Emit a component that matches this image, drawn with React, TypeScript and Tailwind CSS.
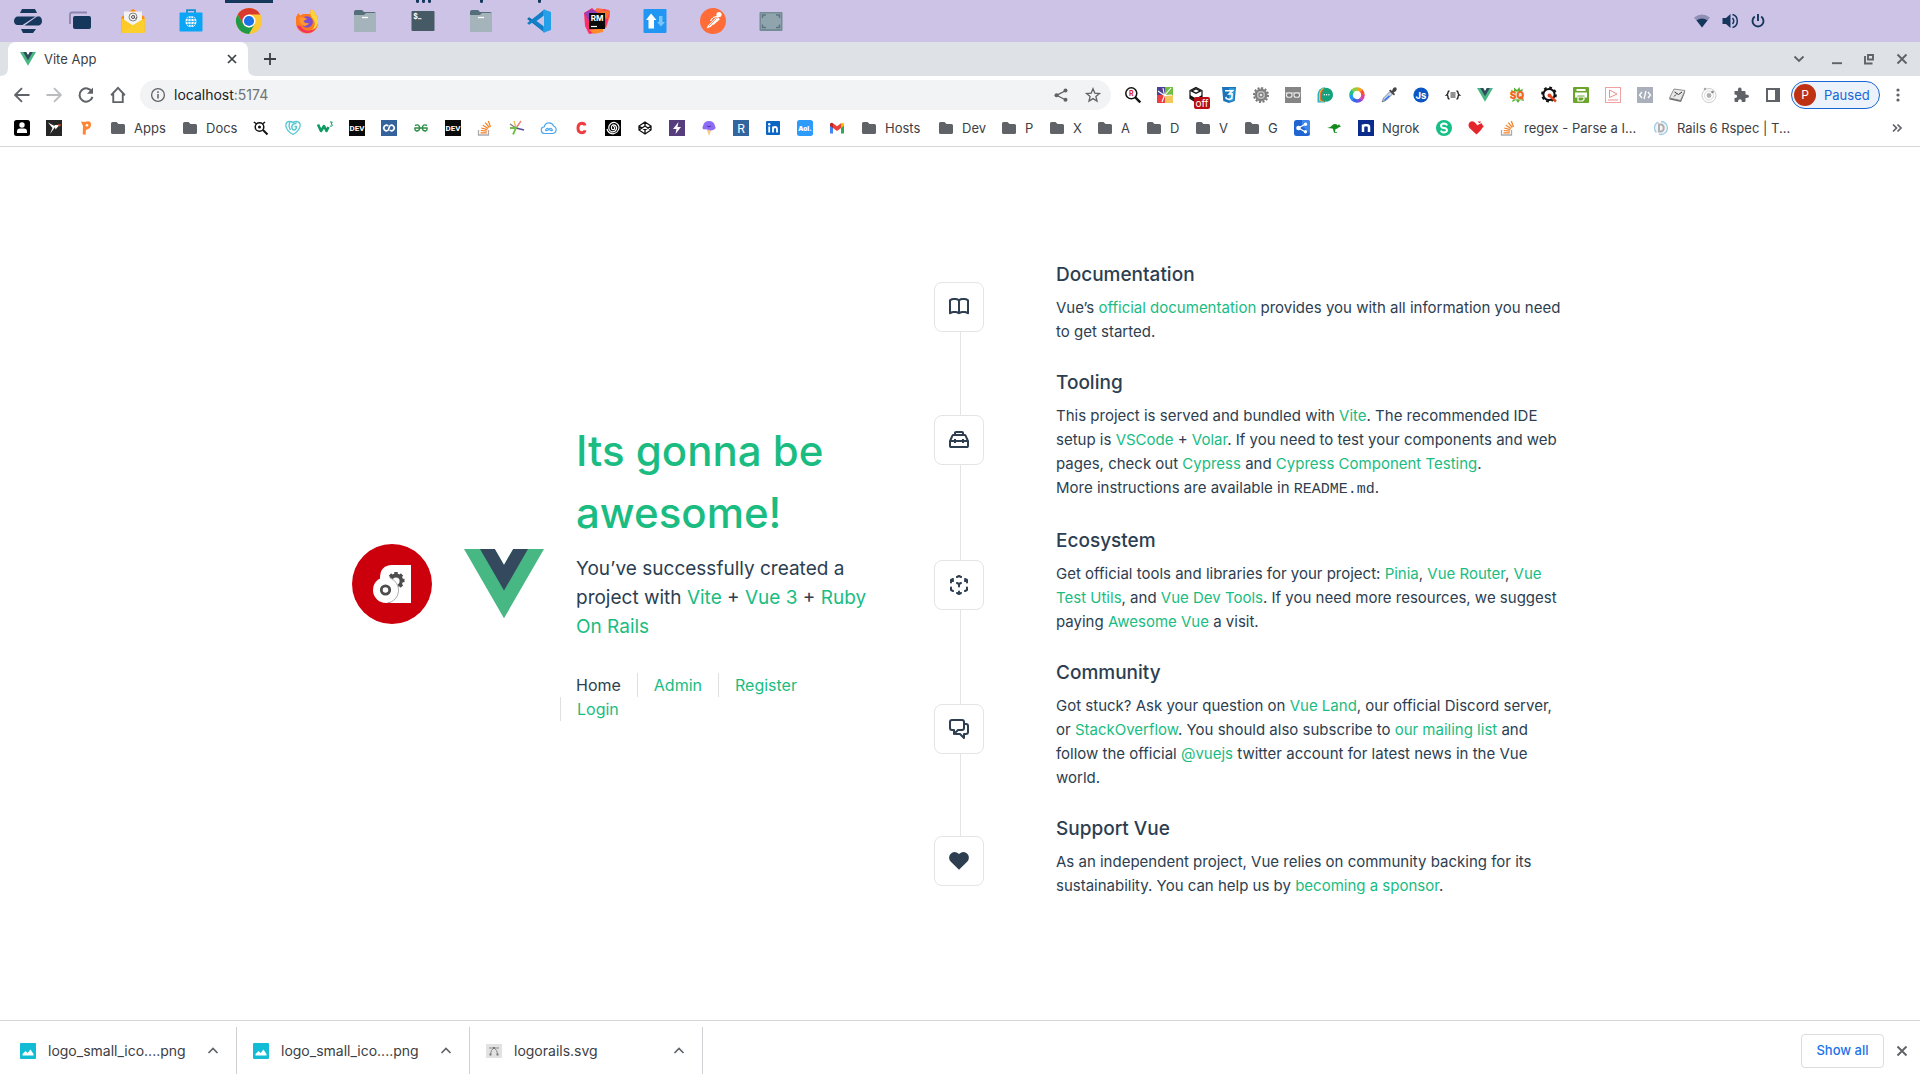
import type { ReactNode } from 'react';

/* ---------- shared drawing helpers ---------- */

function Svg({ children, box = 16, className = 'size-4' }: { children: ReactNode; box?: number; className?: string }) {
  return (
    <svg viewBox={`0 0 ${box} ${box}`} className={`shrink-0 overflow-visible ${className}`} aria-hidden="true">
      {children}
    </svg>
  );
}

function Glyph({ x, y, size, fill = '#fff', children, weight = 700 }: { x: number; y: number; size: number; fill?: string; children: ReactNode; weight?: number }) {
  return (
    <text x={x} y={y} fontSize={size} fill={fill} fontWeight={weight} textAnchor="middle" fontFamily="Inter, sans-serif">
      {children}
    </text>
  );
}

function VueLogo({ className }: { className: string }) {
  return (
    <svg viewBox="0 0 261.76 226.69" className={`shrink-0 ${className}`} aria-hidden="true">
      <path d="M161.096.001l-30.225 52.351L100.647.001H-.005l130.877 226.688L261.749.001z" fill="#47b784" />
      <path d="M161.096.001l-30.225 52.351L100.647.001H52.346l78.526 136.01L209.398.001z" fill="#34495e" />
    </svg>
  );
}

function RailsLogo() {
  return (
    <Svg box={80} className="size-20">
      <circle cx="40" cy="40" r="40" fill="#cc000c" />
      <path d="M28 34c0-8 4-13 12-13h19v38H38L28 46z" fill="#fff" />
      <g fill="#4d4d4d">
        <circle cx="44" cy="36.500" r="7" />
        {[0, 45, 90, 135, 180, 225, 270, 315].map((a) => (
          <rect key={a} x="42.300" y="28" width="3.400" height="5" transform={`rotate(${a} 44 36.500)`} />
        ))}
      </g>
      <circle cx="44" cy="37" r="3.600" fill="#fff" />
      <circle cx="34" cy="46" r="13" fill="#fff" />
      <path d="M38 34a13 13 0 0 1-2 25" fill="none" stroke="#777" strokeWidth=".6" />
      <circle cx="33.500" cy="46" r="4.200" fill="none" stroke="#4d4d4d" strokeWidth="2.800" />
    </Svg>
  );
}

const StackOverflow = (
  <Svg>
    <path d="M1.500 10v5h10v-5" fill="none" stroke="#a9abae" strokeWidth="1.300" />
    <path d="M3.500 12.800h6.300M3.700 10.500l6.200.7M4.300 8l6 1.700M5.800 5.200l5.400 3.300M8.300 2.600l4 4.900M11.300 1l2.200 6" stroke="#f48024" strokeWidth="1.200" />
  </Svg>
);

const Folder = (
  <Svg>
    <path d="M1 3.500Q1 2 2.500 2h4l2 2h5Q15 4 15 5.500v7q0 1.500-1.500 1.500h-11Q1 14 1 12.500z" fill="#5f6368" />
  </Svg>
);

const DevBadge = (
  <Svg>
    <rect width="16" height="16" fill="#0a0a0a" />
    <text x="8" y="11" fontSize="8" fill="#fff" fontWeight="700" textAnchor="middle" fontFamily="Roboto, sans-serif">DEV</text>
  </Svg>
);

/* ---------- desktop panel ---------- */

const FilesIcon = (
  <Svg box={24} className="size-6">
    <path d="M1 3q0-2 2-2h6l2 2h10q2 0 2 2v4H1z" fill="#546e7a" />
    <path d="M1 6h10l2-2h10v18q0 1-1 1H2q-1 0-1-1z" fill="#a5b4ba" />
    <path d="M9 8.500h6" stroke="#fff" strokeWidth="1.300" />
  </Svg>
);

const apps: { name: string; icon: ReactNode; dots?: number; active?: boolean }[] = [
  {
    name: 'Mail',
    icon: (
      <Svg box={24} className="size-6">
        <path d="M.5 8L12 0l11.500 8v15q0 1-1 1h-21q-1 0-1-1z" fill="#fb8c00" />
        <path d="M3 2.500h18V17H3z" fill="#f3f3f3" />
        <path d="M.5 9L12 16.500 23.500 9v14q0 1-1 1h-21q-1 0-1-1z" fill="#ffca28" />
        <path d="M1 24l11-8 11.500-6v13q0 1-1 1z" fill="#fbd02e" />
        <circle cx="12" cy="8" r="4" fill="none" stroke="#777" strokeWidth=".9" />
        <circle cx="12" cy="8" r="1.500" fill="none" stroke="#555" strokeWidth="1" />
        <path d="M13.500 6.500v2.500q1 1.500 2.500-1" fill="none" stroke="#555" strokeWidth=".8" />
      </Svg>
    ),
  },
  {
    name: 'Software',
    icon: (
      <Svg box={24} className="size-6">
        <path d="M8 5V1.200h8V5" fill="none" stroke="#1a8fd0" strokeWidth="1.800" />
        <rect x=".5" y="3.500" width="23" height="19" rx="1" fill="#0ba5f5" />
        <circle cx="12" cy="12.500" r="5.500" fill="#fff" />
        <path d="M12 7v11M6.500 12.500h11M7.500 9.500h9M7.500 15.500h9M9.500 8q-1.500 4.500 0 9M14.500 8q1.500 4.500 0 9" fill="none" stroke="#0ba5f5" strokeWidth=".8" />
      </Svg>
    ),
  },
  {
    name: 'Chrome',
    active: true,
    icon: (
      <Svg box={26} className="size-[26px]">
        <circle cx="13" cy="13" r="13" fill="#fcc934" />
        <path d="M13 6.500h11.260A13 13 0 0 0 1.740 6.500L7.370 16.250z" fill="#d93a2f" />
        <path d="M1.740 6.500A13 13 0 0 0 13 26l5.630-9.750L13 19.500l-5.630-3.250z" fill="#1e9a4a" />
        <circle cx="13" cy="13" r="6.500" fill="#fff" />
        <circle cx="13" cy="13" r="5.100" fill="#1a73e8" />
      </Svg>
    ),
  },
  {
    name: 'Firefox',
    icon: (
      <Svg box={24} className="size-6">
        <path d="M1 8L3.500 4l1.500 2.500L8 5l7 0 1-5c3 1.500 4 3.500 4.500 5 1.500 1.500 3 5 2.500 9a11 10.500 0 0 1-22 0z" fill="#ff7a1f" />
        <path d="M16 0c3 1.500 4 3.500 4.500 5 1.500 1.500 3 5 2.500 8.500-.5 4-4 7.500-7 8 4-3 5-8 2-11.500-2-2.500-3.500-4-2-10z" fill="#ffd43a" />
        <path d="M2 16a10.500 10.500 0 0 0 19 3c-6 4.500-13 3-15-1.500z" fill="#f5315f" />
        <circle cx="12" cy="13" r="5.800" fill="#7b4fd0" />
        <path d="M4 8.500q5-1 8.500 1.500-3 .5-4 2.500 2 2.500 6 1.500-3 4-6.500 2.500T4 8.500z" fill="#ff9830" />
      </Svg>
    ),
  },
  { name: 'Files', icon: FilesIcon },
  {
    name: 'Terminal',
    dots: 3,
    icon: (
      <Svg box={24} className="size-6">
        <rect x=".5" y="2" width="23" height="20" rx="1" fill="#455a64" />
        <Glyph x={4.500} y={10} size={7}>$</Glyph>
        <path d="M7 9.700h3.500" stroke="#fff" />
      </Svg>
    ),
  },
  { name: 'Files home', icon: FilesIcon, dots: 1 },
  {
    name: 'Code',
    dots: 1,
    icon: (
      <Svg box={24} className="size-6">
        <path d="M17 .8L5.800 11 2.300 8.200.5 9.200v1L17.500 23.500z" fill="#0f6fb5" />
        <path d="M17 23.200L5.800 13l-3.500 2.800-1.800-1v-1L17.500.5z" fill="#1180c8" />
        <path d="M17.200.5L24 3v18l-6.800 2.500c-1 0-1-.5-1-.5V1q0-.5 1-.5z" fill="#25a0e8" />
        <path d="M17 6.500v11L9.500 12z" fill="#cbc2e6" />
      </Svg>
    ),
  },
  {
    name: 'RubyMine',
    icon: (
      <Svg box={26} className="size-[26px]">
        <path d="M13 0l12 2 1 6-4 12H8L2 12z" fill="#ff6a3a" />
        <path d="M0 5l8-5 6 5 6-4 6 2-4 16-12 6-5 1-4-8z" fill="#ff2d6b" />
        <path d="M0 5l8-4 6 4-9 8z" fill="#9b3fb5" />
        <path d="M5 22l14-2v4l-9 2z" fill="#ff8a2a" />
        <path d="M18 2l8 1-3 8-8-6z" fill="#f86f31" />
        <rect x="5" y="5" width="16" height="16" fill="#0b0b0b" />
        <Glyph x={13} y={13} size={8}>RM</Glyph>
        <path d="M7 18.500h6" stroke="#fff" strokeWidth="1.200" />
      </Svg>
    ),
  },
  {
    name: 'Network',
    icon: (
      <Svg box={24} className="size-6">
        <rect x=".5" width="23" height="24" rx="1" fill="#2196f3" />
        <path d="M8 4.500l5.500 6.500H11v8.500H5.500V11H3z" fill="#fff" />
        <path d="M16 7h3.500v6H22l-4 4.500-4-4.500h2z" fill="#7cc4fa" />
      </Svg>
    ),
  },
  {
    name: 'Postman',
    icon: (
      <Svg box={26} className="size-[26px]">
        <circle cx="13" cy="13" r="13" fill="#ff6c37" />
        <circle cx="19" cy="6.500" r="2.600" fill="#fff" />
        <path d="M6.500 20.500l1.500-3 8-8 2.500 2-8 7.500z" fill="#fff" />
        <path d="M13 9.500l4-1 2 3-6 5M12.500 10l-2 3" fill="none" stroke="#fff" strokeWidth="1.200" />
        <path d="M9 18l7.500-7.500" stroke="#ff6c37" strokeWidth=".7" />
      </Svg>
    ),
  },
  {
    name: 'Screenshot',
    icon: (
      <Svg box={24} className="size-6">
        <rect x=".5" y="3" width="23" height="19" rx="1" fill="#748c96" />
        <rect x="2" y="4.500" width="20" height="15.500" fill="#90a4ae" />
        <path d="M3.500 9V6H7M17 6h3.500v3M20.500 15.500v3H17M7 18.500H3.500v-3" fill="none" stroke="#5c7580" strokeWidth="1.500" />
      </Svg>
    ),
  },
];

function DesktopPanel() {
  return (
    <header className="flex h-[42px] shrink-0 items-center bg-[#cdc3e7]">
      <button aria-label="Menu" className="flex h-full w-14 items-center justify-center">
        <Svg box={28} className="size-7 text-[#15375c]">
          <g fill="currentColor">
            <path d="M8 2h13l2 4H6zM7 22h15l-3 4H9z" />
            <path d="M3 9.500h18.500L8.500 18H3q-3-1-3-4t3-4.500zM26 9.500q2 1.500 2 4.500t-3 4.500H10.500L23 9.500z" />
          </g>
        </Svg>
      </button>
      <button aria-label="Workspaces" className="flex h-full w-12 items-center justify-center">
        <Svg box={24} className="size-6">
          <path d="M2 15V5.500q0-2 2-2h15" fill="none" stroke="#8b86ae" strokeWidth="1.800" />
          <rect x="5" y="7" width="18" height="13" rx="2" fill="#15375c" />
        </Svg>
      </button>
      {apps.map((app) => (
        <button key={app.name} aria-label={app.name} className="relative flex h-full w-[58px] items-center justify-center">
          {app.icon}
          {app.active && <span className="absolute top-0 h-[3px] w-12 bg-[#15375c]" />}
          {app.dots && (
            <span className="absolute top-0 flex gap-[3px]">
              {Array.from({ length: app.dots }, (_, i) => (
                <span key={i} className="h-[3px] w-[3px] rounded-b-full bg-[#15375c]" />
              ))}
            </span>
          )}
        </button>
      ))}
      <div className="mr-[154px] ml-auto flex items-center gap-3">
        <button aria-label="Wi-Fi">
          <Svg>
            <path d="M0 4.500Q8-1.500 16 4.500L8 14.500z" fill="#8f8fb6" />
            <path d="M2.500 7.300q5.500-3.600 11 0L8 14.500z" fill="#15375c" />
          </Svg>
        </button>
        <button aria-label="Volume">
          <Svg>
            <path d="M.5 5H4l4.500-4v14L4 11H.5z" fill="#15375c" />
            <path d="M10.500 5q2.500 3 0 6M10.500 1.500a6.800 6.800 0 0 1 0 13" fill="none" stroke="#15375c" strokeWidth="1.500" />
          </Svg>
        </button>
        <button aria-label="Power">
          <Svg>
            <path d="M4.800 3.500a5.500 5.500 0 1 0 6.400 0M8 1v7" fill="none" stroke="#15375c" strokeWidth="1.900" />
          </Svg>
        </button>
      </div>
    </header>
  );
}

/* ---------- browser chrome ---------- */

function TabStrip() {
  return (
    <div className="flex h-[34px] shrink-0 items-stretch bg-[#dee1e6] text-[#5f6368]">
      <Svg box={8} className="size-2 self-end">
        <path d="M8 0v8H0Q8 8 8 0z" fill="#fff" />
      </Svg>
      <div className="flex w-60 items-center rounded-t-lg bg-white pr-2 pl-3">
        <VueLogo className="w-4" />
        <span className="ml-2 flex-1 pt-0.5 text-[13px] text-[#3c4043]">Vite App</span>
        <button aria-label="Close tab" className="flex size-4 items-center justify-center">
          <Svg>
            <path d="M4 4l8 8M12 4l-8 8" stroke="#3c4043" strokeWidth="1.700" />
          </Svg>
        </button>
      </div>
      <Svg box={8} className="size-2 self-end">
        <path d="M0 0v8h8Q0 8 0 0z" fill="#fff" />
      </Svg>
      <button aria-label="New tab" className="ml-1 flex w-5 items-center justify-center">
        <Svg>
          <path d="M8 2v12M2 8h12" stroke="#3c4043" strokeWidth="1.800" />
        </Svg>
      </button>
      <div className="mr-2.5 ml-auto flex items-center">
        <button aria-label="Search tabs" className="mr-[22px]">
          <Svg>
            <path d="M3.500 5.500L8 10l4.500-4.500" fill="none" stroke="#5f6368" strokeWidth="1.900" />
          </Svg>
        </button>
        <button aria-label="Minimize" className="mr-4">
          <Svg>
            <path d="M3 12.200h10" stroke="#5f6368" strokeWidth="1.900" />
          </Svg>
        </button>
        <button aria-label="Restore" className="mr-[17px]">
          <Svg>
            <path d="M7 4h5v4.500H7zM4 5v7.500h7.500" fill="none" stroke="#5f6368" strokeWidth="1.900" />
          </Svg>
        </button>
        <button aria-label="Close window">
          <Svg>
            <path d="M3.500 3.500l9 9M12.500 3.500l-9 9" stroke="#5f6368" strokeWidth="1.900" />
          </Svg>
        </button>
      </div>
    </div>
  );
}

const extensions: { name: string; icon: ReactNode }[] = [
  {
    name: 'Regex search',
    icon: (
      <Svg>
        <circle cx="6.300" cy="6.300" r="5.500" fill="#fff" stroke="#111" strokeWidth="1.500" />
        <path d="M10.300 10.300l5 5" stroke="#111" strokeWidth="2.400" />
        <Glyph x={6.300} y={9} size={7} fill="#d9232e">R</Glyph>
      </Svg>
    ),
  },
  {
    name: 'Color map',
    icon: (
      <Svg>
        <rect width="8" height="8" fill="#4b3f8f" />
        <rect x="8" width="8" height="8" fill="#6fbf44" />
        <rect y="8" width="8" height="8" fill="#ee3d43" />
        <rect x="8" y="8" width="8" height="8" fill="#f2c75c" />
        <path d="M7.500 8.500L14 1M7.500 8.500L6 1M7.500 8.500L1 4M7.500 8.500l7.500-.5M7.500 8.500L5 15" stroke="#fff" strokeWidth="1.100" />
      </Svg>
    ),
  },
  {
    name: 'Blocker',
    icon: (
      <span className="relative">
        <Svg>
          <path d="M7 .5l6 3v8l-6 3.500-6-3.500v-8z" fill="#fff" stroke="#111" strokeWidth="1.200" />
          <path d="M1 4l6 3 6-3-6-3zM1 8l6 3.500L13 8v3l-6 3.500L1 11z" fill="#111" />
          <path d="M4 4l3-1.500L10 4 7 5.500z" fill="#fff" />
        </Svg>
        <span className="absolute top-2.5 left-[5px] h-3 w-4 rounded-xs bg-[#b80d12] text-center text-[10px] leading-3 text-white">off</span>
      </span>
    ),
  },
  {
    name: 'CSS',
    icon: (
      <Svg>
        <path d="M1 0h14l-1.300 14L8 16l-5.700-2z" fill="#1b73ba" />
        <path d="M8 1.200h5.700l-1.100 12L8 14.700z" fill="#31a3dc" />
        <path d="M4 3.800h7.500L8 7h3.200l-.4 4.500-2.800.9-2.800-.9-.2-1.700" fill="none" stroke="#fff" strokeWidth="1.500" />
      </Svg>
    ),
  },
  {
    name: 'Settings gear',
    icon: (
      <Svg>
        <circle cx="8" cy="8" r="6.500" fill="#8b8b8b" />
        <circle cx="8" cy="8" r="7" fill="none" stroke="#777" strokeWidth="2" strokeDasharray="2 1.660" />
        <circle cx="8" cy="8" r="4.800" fill="#b9b9b9" stroke="#666" strokeWidth=".8" />
        <circle cx="8" cy="8" r="2" fill="#e4e4e4" stroke="#666" />
      </Svg>
    ),
  },
  {
    name: 'Reader glasses',
    icon: (
      <Svg>
        <rect width="16" height="16" fill="#858585" />
        <path d="M.5 6h15" stroke="#e8e8e8" />
        <rect x="1.500" y="6" width="5.500" height="4.300" rx="2" fill="#777" stroke="#eee" strokeWidth="1.100" />
        <rect x="9" y="6" width="5.500" height="4.300" rx="2" fill="#777" stroke="#eee" strokeWidth="1.100" />
      </Svg>
    ),
  },
  {
    name: 'Chat',
    icon: (
      <Svg>
        <path d="M.5 15.500V7A7.500 7.500 0 0 1 8 .2v15.300z" fill="#2bb3c8" />
        <path d="M2 14V6.500Q3.500 1.500 8 .8V15z" fill="#f2c230" />
        <path d="M3.300 13V6.500Q4.500 2.500 8 1.500V15z" fill="#e85038" />
        <path d="M5.500 13.500Q4 8 6.500 1.500Q9-.2 12 1.500a7 7 0 0 1 0 12.600Q9 15.800 5.500 13.500z" fill="#12a37c" />
        <circle cx="7.300" cy="7.800" r=".7" fill="#fff" />
        <circle cx="9.600" cy="7.800" r=".7" fill="#fff" />
        <circle cx="11.900" cy="7.800" r=".7" fill="#fff" />
      </Svg>
    ),
  },
  {
    name: 'Color wheel',
    icon: (
      <Svg>
        {['#f9a11b', '#f4523b', '#e33fa1', '#7d4cdb', '#3567e8', '#1e9af0', '#21c08b', '#8ccf3f'].map((c, i) => (
          <circle key={c} cx="8" cy="8" r="6" fill="none" stroke={c} strokeWidth="3.600" strokeDasharray="4.800 33" transform={`rotate(${i * 45 - 90} 8 8)`} />
        ))}
      </Svg>
    ),
  },
  {
    name: 'Eyedropper',
    icon: (
      <Svg>
        <path d="M1 15l1.500-4L9 4.500 11.500 7 5 13.500z" fill="#c9d8f3" stroke="#777" strokeWidth=".8" />
        <path d="M2 13.800l6-5.500 1 1-4.500 4z" fill="#2f6fe4" />
        <path d="M8 3.500l1.500-1L11 4l1-2.500Q14-.5 15.300.8t-.5 3.400L12.500 5.500 14 7l-1 1.500z" fill="#444" />
      </Svg>
    ),
  },
  {
    name: 'JavaScript',
    icon: (
      <Svg>
        <circle cx="8" cy="8" r="7.600" fill="#0c56c4" />
        <Glyph x={8} y={11.500} size={9.500}>Js</Glyph>
      </Svg>
    ),
  },
  {
    name: 'JSON',
    icon: (
      <Svg>
        <path d="M4.500 4Q3 4 3 5.500T1.700 8Q3 8 3 10t1.500 2M11.500 4Q13 4 13 5.500T14.300 8Q13 8 13 10t-1.500 2" fill="none" stroke="#222" strokeWidth="1.400" />
        <path d="M5.500 6h5M5.500 8h5M5.500 10h5" stroke="#222" strokeWidth="1.100" />
      </Svg>
    ),
  },
  { name: 'Vue devtools', icon: <VueLogo className="w-4" /> },
  {
    name: 'SQ',
    icon: (
      <Svg>
        <path d="M2 3l3 1 0-3.500L8 3l2.500-3L11 3l3-1-1 3 2 9-4-1-2 3-2-3-4 2 1-3z" fill="#57b031" />
        <rect x="1" y="4.500" width="14" height="8" fill="#fff" opacity=".8" />
        <Glyph x={8} y={12} size={10} fill="#f4661f" weight={900}>SQ</Glyph>
      </Svg>
    ),
  },
  {
    name: 'Quality search',
    icon: (
      <Svg>
        <circle cx="8" cy="7.500" r="5.600" fill="none" stroke="#111" strokeWidth="2" />
        <circle cx="8" cy="7.500" r="7" fill="none" stroke="#111" strokeWidth="1.800" strokeDasharray="2.800 2.700" />
        <path d="M8.500 8.500l6.500 6" stroke="#e2471f" strokeWidth="2.400" />
        <circle cx="8.500" cy="8.500" r="2" fill="#e2471f" />
      </Svg>
    ),
  },
  {
    name: 'Print',
    icon: (
      <Svg>
        <rect width="16" height="16" rx="1" fill="#6ba52c" />
        <path d="M3.500 2h9v2h-9z" fill="#fff" />
        <path d="M2 5.500h12v5h-2.500v-2h-7v2H2z" fill="#fff" />
        <path d="M5 10h6v2.500L9.500 14H5z" fill="none" stroke="#fff" strokeWidth="1.200" />
      </Svg>
    ),
  },
  {
    name: 'Recorder',
    icon: (
      <Svg>
        <rect x=".5" y=".5" width="15" height="15" fill="#fff" stroke="#f0a2a2" />
        <path d="M4.500 3v7.500L12 7z" fill="none" stroke="#ee8d8d" />
        <path d="M3 13h10" stroke="#ee8d8d" />
      </Svg>
    ),
  },
  {
    name: 'Source',
    icon: (
      <Svg>
        <rect width="16" height="16" fill="#a9b0bc" />
        <path d="M5 5L2.500 8 5 11M11 5l2.500 3L11 11M9 4l-2 8" fill="none" stroke="#fff" strokeWidth="1.300" />
      </Svg>
    ),
  },
  {
    name: 'Keyboard',
    icon: (
      <Svg>
        <path d="M5 2l11 1.500L11.500 13.500.5 11z" fill="#e8e8e8" stroke="#777" strokeWidth=".8" />
        <path d="M.5 11l11 2.500L16 4v1.500L12 15 .5 12.500z" fill="#6f6f6f" />
        <path d="M5.500 5l4 2.500L13 5M7 7.500L5 9.500" fill="none" stroke="#333" />
      </Svg>
    ),
  },
  {
    name: 'Orbit',
    icon: (
      <Svg>
        <circle cx="8" cy="8.500" r="7" fill="none" stroke="#cccccc" />
        <circle cx="8" cy="8.500" r="4.500" fill="none" stroke="#d8d8d8" />
        <circle cx="8" cy="8.500" r="2.400" fill="#b0b0b0" />
        <circle cx="4" cy="2" r="1.300" fill="#aaa" />
        <circle cx="11.500" cy="5" r="1.300" fill="#888" />
      </Svg>
    ),
  },
  {
    name: 'Extensions',
    icon: (
      <Svg>
        <path d="M1.500 4H5q-.5-3.500 1.800-3.500T8.500 4h3q1 0 1 1v2.500q3.500-.3 3.500 1.800t-3.500 1.700V14q0 1-1 1H8.800q.2-2.800-1.800-2.800T5 15H2.500q-1 0-1-1v-3q2.700.2 2.700-1.700T1.500 7.500z" fill="#5f6368" />
      </Svg>
    ),
  },
  {
    name: 'Side panel',
    icon: (
      <Svg>
        <path d="M2 2h12v12H2z" fill="none" stroke="#5f6368" strokeWidth="2" />
        <path d="M10 1h5v14h-5z" fill="#5f6368" />
      </Svg>
    ),
  },
];

function Toolbar() {
  return (
    <div className="flex h-[38px] shrink-0 items-center bg-white pl-3">
      <div className="flex items-center gap-3">
        <button aria-label="Back">
          <Svg className="size-5">
            <path d="M14 8H3M8 2.500L2.500 8 8 13.500" fill="none" stroke="#5f6368" strokeWidth="1.500" />
          </Svg>
        </button>
        <button aria-label="Forward">
          <Svg className="size-5">
            <path d="M2 8h11M8 2.500L13.500 8 8 13.500" fill="none" stroke="#babcbe" strokeWidth="1.500" />
          </Svg>
        </button>
        <button aria-label="Reload">
          <Svg className="size-5">
            <path d="M12.800 5.500A5.300 5.300 0 1 0 13.200 9.500" fill="none" stroke="#5f6368" strokeWidth="1.600" />
            <path d="M13.600 2v5H8.800z" fill="#5f6368" />
          </Svg>
        </button>
        <button aria-label="Home">
          <Svg className="size-5">
            <path d="M2.500 8.200L8 2.300l5.500 5.900M4.200 7v6.700h7.600V7" fill="none" stroke="#5f6368" strokeWidth="1.500" />
          </Svg>
        </button>
      </div>
      <div className="ml-3 flex h-[30px] flex-1 items-center rounded-full bg-[#f1f3f4] pr-2.5 pl-2.5">
        <Svg>
          <circle cx="8" cy="8" r="6.400" fill="none" stroke="#5f6368" strokeWidth="1.300" />
          <path d="M8 7v4.500M8 4.300v1.600" stroke="#5f6368" strokeWidth="1.500" />
        </Svg>
        <div role="textbox" aria-label="Address" tabIndex={0} className="ml-2 flex-1 text-sm text-[#202124] outline-none">
          localhost<span className="text-[#6f7377]">:5174</span>
        </div>
        <button aria-label="Share" className="mr-4">
          <Svg>
            <path d="M13 3.500L3.500 8.300 13 13" fill="none" stroke="#5f6368" strokeWidth="1.300" />
            <g fill="#5f6368">
              <circle cx="12.500" cy="3.500" r="2" />
              <circle cx="3.500" cy="8.300" r="2" />
              <circle cx="12.500" cy="12.800" r="2" />
            </g>
          </Svg>
        </button>
        <button aria-label="Bookmark">
          <Svg>
            <path d="M8 1.800l1.800 4.300 4.700.4-3.600 3 1.100 4.600L8 11.600l-4 2.500 1.100-4.600-3.600-3 4.700-.4z" fill="none" stroke="#5f6368" strokeWidth="1.300" />
          </Svg>
        </button>
      </div>
      <div className="ml-3.5 flex items-center gap-4">
        {extensions.map((e) => (
          <button key={e.name} aria-label={e.name} className="flex size-4 items-center justify-center">
            {e.icon}
          </button>
        ))}
      </div>
      <button className="ml-2.5 flex h-7 w-[89px] items-center rounded-full border border-[#1a66d2] bg-[#ebf2fb] pl-0.5 text-[13px] text-[#1967d2]">
        <span className="mr-2 flex size-[22px] items-center justify-center rounded-full bg-[#bf3113] text-xs text-white">P</span>
        <span className="pt-0.5">Paused</span>
      </button>
      <button aria-label="Browser menu" className="mr-3.5 ml-2.5">
        <Svg>
          <g fill="#5f6368">
            <circle cx="8" cy="3" r="1.600" />
            <circle cx="8" cy="8" r="1.600" />
            <circle cx="8" cy="13" r="1.600" />
          </g>
        </Svg>
      </button>
    </div>
  );
}

const bookmarks: { id: string; label?: string; width?: string; icon: ReactNode }[] = [
  {
    id: 'contact',
    icon: (
      <Svg>
        <rect width="16" height="16" rx="2.500" fill="#000" />
        <circle cx="8" cy="5" r="2.700" fill="#fff" />
        <path d="M3 13V11.500Q3 8.500 6 8.500h4q3 0 3 3V13z" fill="#fff" />
      </Svg>
    ),
  },
  {
    id: 'snapcraft',
    icon: (
      <Svg>
        <rect width="16" height="16" fill="#262626" />
        <path d="M2 2.500l7.500 4L4 14l2.500-6zM8.500 5h5L9.500 9.500z" fill="#fff" />
        <path d="M11 4.500h4.500l-2 2z" fill="#e95420" />
      </Svg>
    ),
  },
  {
    id: 'product',
    icon: (
      <Svg>
        <path d="M3 1.500l4 .5q5-2 6 1.500.5 5-5 6.500L7.500 15l-2.800-.8L5 6z" fill="#ff8533" />
        <circle cx="9" cy="5.300" r="1.300" fill="#fff" />
      </Svg>
    ),
  },
  { id: 'apps', label: 'Apps', width: 'w-8', icon: Folder },
  { id: 'docs', label: 'Docs', width: 'w-[31px]', icon: Folder },
  {
    id: 'search',
    icon: (
      <Svg>
        <circle cx="6.500" cy="7" r="4.300" fill="none" stroke="#111" strokeWidth="1.500" />
        <circle cx="6.500" cy="7" r="1.500" fill="#111" />
        <path d="M10 10l4.500 4.500" stroke="#111" strokeWidth="2" />
        <path d="M.8 2l3 2M12 2L9.500 4" stroke="#111" strokeWidth="1.500" />
      </Svg>
    ),
  },
  {
    id: 'golem',
    icon: (
      <Svg>
        <path d="M8 14.500Q1.500 11 .8 5.500 1 1.500 4.500 1.500 7 1.500 8 2.500 9 1.500 11.500 1.500q3.700.3 3.700 4Q14.500 11 8 14.500z" fill="none" stroke="#56c6d2" strokeWidth="1.300" />
        <path d="M5 2Q3 6 5.500 10M11.500 3.500Q7.500 3 6.800 6.500q0 3.500 2.500 3.500Q11.500 9.500 11.500 6.500H9.500" fill="none" stroke="#56c6d2" strokeWidth="1.400" />
      </Svg>
    ),
  },
  {
    id: 'w3schools',
    icon: (
      <Svg>
        <path d="M1 4.500l3 6.500 3-5 2.500 5L11.500 7" fill="none" stroke="#0f9b63" strokeWidth="2.600" strokeLinejoin="round" />
        <path d="M13 2h2.300L14 4q1.800.2 1.200 1.700-.7 1-2.200.3" fill="none" stroke="#0f9b63" />
      </Svg>
    ),
  },
  { id: 'dev', icon: DevBadge },
  {
    id: 'codeinfinity',
    icon: (
      <Svg>
        <rect width="16" height="16" fill="#34629c" />
        <path d="M7.300 6A2.700 2.700 0 1 0 7.300 10L8.700 6A2.700 2.700 0 1 1 8.700 10" fill="none" stroke="#fff" strokeWidth="1.600" />
      </Svg>
    ),
  },
  {
    id: 'geeks',
    icon: (
      <Svg>
        <path d="M2 5.500q4-2 4.800 2.500Q6.500 11 3.500 11 1.500 10.500 2 8h12q.5 2.500-1.500 3-3 0-3.300-3Q10 3.500 14 5.500" fill="none" stroke="#2f8d46" strokeWidth="1.400" />
      </Svg>
    ),
  },
  { id: 'dev-2', icon: DevBadge },
  { id: 'stack', icon: StackOverflow },
  {
    id: 'rays',
    icon: (
      <Svg>
        <path d="M7 8L12 1" stroke="#ef7f7c" strokeWidth="1.400" />
        <path d="M7 8L5 1" stroke="#e8c04c" strokeWidth="1.300" />
        <path d="M7 8L1 4" stroke="#777" strokeWidth="1.200" />
        <path d="M7 8l8 2" stroke="#5a4d98" strokeWidth="1.600" />
        <path d="M1 8h6l-3 6.500" fill="none" stroke="#6fbf44" strokeWidth="1.800" />
      </Svg>
    ),
  },
  {
    id: 'cloud',
    icon: (
      <Svg>
        <path d="M4 13.500a3.300 3.300 0 0 1-.8-6.600A4.900 4.900 0 0 1 12.600 6 3.900 3.900 0 0 1 12 13.500z" fill="none" stroke="#4ba7ee" strokeWidth="1.100" />
        <path d="M8 9.500Q6 7 4.900 9.500T8 9.500q2-2.500 3.100 0T8 9.500" fill="none" stroke="#4ba7ee" strokeWidth="1.200" />
      </Svg>
    ),
  },
  {
    id: 'c',
    icon: (
      <Svg>
        <path d="M12 5.500Q11.500 3.200 9 3.200 5 3.400 5 8t4 4.800q2.500 0 3-2.500" fill="none" stroke="#ef3e42" strokeWidth="3" />
      </Svg>
    ),
  },
  {
    id: 'spiral',
    icon: (
      <Svg>
        <rect width="16" height="16" fill="#000" />
        <path d="M8 6.500a1.600 1.600 0 1 1-1.500 1.800Q6 5 9 4.800 12 5.500 11.500 9 10 12.500 6.500 11.800 3 10 4 6 6 2 10 2.500q4 1.500 4 5.500-1 5-6 5.800Q3 13.500 2 9" fill="none" stroke="#fff" strokeWidth="1.200" />
      </Svg>
    ),
  },
  {
    id: 'codepen',
    icon: (
      <Svg>
        <path d="M8 2l6 4v4l-6 4-6-4V6zM2 6l6 4 6-4M2 10l6-4 6 4M8 2v4M8 10v4" fill="none" stroke="#111" strokeWidth="1.300" />
      </Svg>
    ),
  },
  {
    id: 'bolt',
    icon: (
      <Svg>
        <rect width="16" height="16" fill="#563d7c" />
        <path d="M9.500 2L4 9h3.500L6.500 14 12 7H8.500z" fill="#fff" />
      </Svg>
    ),
  },
  {
    id: 'icecream',
    icon: (
      <Svg>
        <path d="M5.500 9h5L8 16z" fill="#f8c98c" />
        <path d="M3 9.500Q.5 8.500 2 6 3 1 8 1t6 5q1.500 2.500-1 3.500-2.500 1.500-5 .5T3 9.500z" fill="#8c6cf5" />
        <path d="M6 6q2 1.500 4 0" fill="none" stroke="#4a33a8" />
      </Svg>
    ),
  },
  {
    id: 'r',
    icon: (
      <Svg>
        <rect width="16" height="16" fill="#33659f" />
        <Glyph x={8} y={12.500} size={12} weight={400}>R</Glyph>
      </Svg>
    ),
  },
  {
    id: 'linkedin',
    icon: (
      <Svg>
        <rect x="1" y="1" width="14" height="14" rx="1" fill="#0a66c2" />
        <path d="M4.200 6.500v6M8 6.500v6M8 9.500Q8 7 10 7t2 2.200v3.300" fill="none" stroke="#fff" strokeWidth="1.800" />
        <circle cx="4.200" cy="4.200" r="1.200" fill="#fff" />
      </Svg>
    ),
  },
  {
    id: 'aol',
    icon: (
      <Svg>
        <rect width="16" height="16" rx="2.500" fill="#2d9bfb" />
        <Glyph x={8} y={10.500} size={6.500} weight={900}>Aol.</Glyph>
      </Svg>
    ),
  },
  {
    id: 'gmail',
    icon: (
      <Svg>
        <path d="M1 4v9.500h3V6z" fill="#4285f4" />
        <path d="M15 4v9.500h-3V6z" fill="#34a853" />
        <path d="M1 4q1-2 3-.7V8L1 5.700z" fill="#c5221f" />
        <path d="M15 4q-1-2-3-.7V8l3-2.300z" fill="#fbbc04" />
        <path d="M4 3.300l4 3 4-3V8l-4 3-4-3z" fill="#ea4335" />
      </Svg>
    ),
  },
  { id: 'hosts', label: 'Hosts', width: 'w-[37px]', icon: Folder },
  { id: 'devfolder', label: 'Dev', width: 'w-[23px]', icon: Folder },
  { id: 'p', label: 'P', width: 'w-2', icon: Folder },
  { id: 'x', label: 'X', width: 'w-2', icon: Folder },
  { id: 'a', label: 'A', width: 'w-[9px]', icon: Folder },
  { id: 'd', label: 'D', width: 'w-[9px]', icon: Folder },
  { id: 'v', label: 'V', width: 'w-[9px]', icon: Folder },
  { id: 'g', label: 'G', width: 'w-2.5', icon: Folder },
  {
    id: 'sharelink',
    icon: (
      <Svg>
        <rect width="16" height="16" rx="2.500" fill="#1f66d0" />
        <path d="M8 0h5.500Q16 0 16 2.500v11L8 6z" fill="#3f87ea" />
        <path d="M11.500 4L4.500 8l7 4" fill="none" stroke="#fff" strokeWidth="1.200" />
        <circle cx="4.500" cy="8" r="2.300" fill="#fff" />
        <circle cx="11.500" cy="4.200" r="1.700" fill="#fff" />
        <circle cx="11.500" cy="11.800" r="1.700" fill="#fff" />
      </Svg>
    ),
  },
  {
    id: 'kangaroo',
    icon: (
      <Svg>
        <path d="M1 8q4-.5 5.500-3Q9 3 12 5.500l1-1.500.8 1.500L15 6.500l-2.500 1q-1.500 1.500-3 1.500l-.5 3h2l.2.800H8l-1-4Q5 8 1 8z" fill="#128a1c" />
      </Svg>
    ),
  },
  {
    id: 'ngrok',
    label: 'Ngrok',
    width: 'w-[38px]',
    icon: (
      <Svg>
        <rect width="16" height="16" fill="#0a2a8c" />
        <path d="M5 12V4.500M5 7Q5 5.300 7 5.300h2Q11 5.300 11 7v5" fill="none" stroke="#fff" strokeWidth="2.500" />
      </Svg>
    ),
  },
  {
    id: 's',
    icon: (
      <Svg>
        <circle cx="8" cy="8" r="8" fill="#15bf86" />
        <path d="M11 5.500Q10.500 3.500 8 3.500 5 3.700 5 5.700T8 8t3 2.300T8 12.500q-2.500 0-3-2" fill="none" stroke="#fff" strokeWidth="1.900" />
      </Svg>
    ),
  },
  {
    id: 'heart',
    icon: (
      <Svg>
        <path d="M8.500 14.500L1.500 8Q-.5 5 1.500 2.500 4.500 0 7.500 3L9 5l6.500.5Q15 8 13 10z" fill="#e5252c" />
        <path d="M9.500 1.500h3.500l-1 2z" fill="#e5252c" />
        <path d="M9 5l4.500-2.500L16 6.500 13.500 9.500" fill="#e5252c" stroke="#fff" strokeWidth=".9" />
      </Svg>
    ),
  },
  { id: 'regex', label: 'regex - Parse a I...', width: 'w-[113px]', icon: StackOverflow },
  {
    id: 'rspec',
    label: 'Rails 6 Rspec | T...',
    width: 'w-[114px]',
    icon: (
      <Svg>
        <circle cx="8" cy="8" r="6.500" fill="#f4f4f4" stroke="#9ccbe8" strokeWidth="1.300" strokeDasharray="12 3" />
        <path d="M6 4.500h2q2.700.5 2.700 3.500T8 11.500H6z" fill="none" stroke="#b0b0b0" strokeWidth="2" />
      </Svg>
    ),
  },
];

function BookmarksBar() {
  return (
    <nav aria-label="Bookmarks" className="flex h-[33px] shrink-0 items-center gap-4 border-b border-[#d5d7da] bg-white pb-1 pl-3.5 text-[13px] leading-5 text-[#3c4043]">
      {bookmarks.map((b) => (
        <a key={b.id} href={`#${b.id}`} aria-label={b.label ?? b.id} className="flex h-6 items-center gap-2 whitespace-nowrap">
          {b.icon}
          {b.label && <span className={b.width}>{b.label}</span>}
        </a>
      ))}
      <button aria-label="More bookmarks" className="mr-[15px] ml-auto">
        <Svg>
          <path d="M4 4.500L7.500 8 4 11.500M8.500 4.500L12 8l-3.500 3.500" fill="none" stroke="#5f6368" strokeWidth="1.700" />
        </Svg>
      </button>
    </nav>
  );
}

/* ---------- page ---------- */

function A({ children }: { children: ReactNode }) {
  return (
    <a href="#page" className="text-[#1abc82]">
      {children}
    </a>
  );
}

const navLinks = ['Home', 'Admin', 'Register', 'Login'];

function Greeting() {
  return (
    <section className="flex items-center gap-8 pr-20">
      <RailsLogo />
      <VueLogo className="w-20" />
      <div className="flex-1 pb-[26px]">
        <h1 className="text-[42px] leading-[62px] font-medium text-[#1abc82]">Its gonna be awesome!</h1>
        <h3 className="mt-2.5 text-[19px] leading-[29px]">
          You’ve successfully created a project with <A>Vite</A> + <A>Vue 3</A> + <A>Ruby On Rails</A>
        </h3>
        <nav className="mt-8 -ml-4 flex flex-wrap text-base leading-6">
          {navLinks.map((label, i) => (
            <a
              key={label}
              href={`#${label.toLowerCase()}`}
              className={i === 0 ? 'px-4 text-[#2c3e50]' : 'border-l border-[#e0e0e0] px-4 text-[#1abc82]'}
            >
              {label}
            </a>
          ))}
        </nav>
      </div>
    </section>
  );
}

const items: { title: string; size: [number, number]; path: string; body: ReactNode }[] = [
  {
    title: 'Documentation',
    size: [20, 17],
    path: 'M11 2.253a1 1 0 1 0-2 0h2zm-2 13a1 1 0 1 0 2 0H9zm.447-12.167a1 1 0 1 0 1.107-1.666L9.447 3.086zM1 2.253L.447 1.42A1 1 0 0 0 0 2.253h1zm0 13H0a1 1 0 0 0 1.553.833L1 15.253zm8.447.833a1 1 0 1 0 1.107-1.666l-1.107 1.666zm0-14.666a1 1 0 1 0 1.107 1.666L9.447 1.42zM19 2.253h1a1 1 0 0 0-.447-.833L19 2.253zm0 13l-.553.833A1 1 0 0 0 20 15.253h-1zm-9.553-.833a1 1 0 1 0 1.107 1.666L9.447 14.42zM9 2.253v13h2v-13H9zm1.553-.833C9.203.523 7.42 0 5.5 0v2c1.572 0 2.961.431 3.947 1.086l1.107-1.666zM5.5 0C3.58 0 1.797.523.447 1.42l1.107 1.666C2.539 2.431 3.928 2 5.5 2V0zM0 2.253v13h2v-13H0zm1.553 13.833C2.539 15.431 3.928 15 5.5 15v-2c-1.92 0-3.703.523-5.053 1.42l1.107 1.666zM5.5 15c1.572 0 2.961.431 3.947 1.086l1.107-1.666C9.203 13.523 7.42 13 5.5 13v2zm5.053-11.914C11.539 2.431 12.928 2 14.5 2V0c-1.92 0-3.703.523-5.053 1.42l1.107 1.666zM14.5 2c1.573 0 2.961.431 3.947 1.086l1.107-1.666C18.203.523 16.421 0 14.5 0v2zm3.5.253v13h2v-13h-2zm1.553 12.167C18.203 13.523 16.421 13 14.5 13v2c1.573 0 2.961.431 3.947 1.086l1.107-1.666zM14.5 13c-1.92 0-3.703.523-5.053 1.42l1.107 1.666C11.539 15.431 12.928 15 14.5 15v-2z',
    body: (
      <>
        Vue’s <A>official documentation</A> provides you with all information you need to get started.
      </>
    ),
  },
  {
    title: 'Tooling',
    size: [24, 24],
    path: 'M20 18v-4h-3v1h-2v-1H9v1H7v-1H4v4h16M6.33 8l-1.74 4H7v-1h2v1h6v-1h2v1h2.41l-1.74-4H6.33M9 5v1h6V5H9m12.84 7.61c.1.22.16.48.16.8V18c0 .53-.21 1-.6 1.41c-.4.4-.85.59-1.4.59H4c-.55 0-1-.19-1.4-.59C2.21 19 2 18.53 2 18v-4.59c0-.32.06-.58.16-.8L4.5 7.22C4.84 6.41 5.45 6 6.33 6H7V5c0-.55.18-1 .57-1.41C7.96 3.2 8.44 3 9 3h6c.56 0 1.04.2 1.43.59c.39.41.57.86.57 1.41v1h.67c.88 0 1.49.41 1.83 1.22l2.34 5.39z',
    body: (
      <>
        This project is served and bundled with <A>Vite</A>. The recommended IDE setup is <A>VSCode</A> + <A>Volar</A>. If you need to test your components and web pages, check out <A>Cypress</A> and <A>Cypress Component Testing</A>.
        <br />
        More instructions are available in <code className="font-['Liberation_Mono',monospace]">README.md</code>.
      </>
    ),
  },
  {
    title: 'Ecosystem',
    size: [18, 20],
    path: 'M11.447 8.894a1 1 0 1 0-.894-1.789l.894 1.789zm-2.894-.789a1 1 0 1 0 .894 1.789l-.894-1.789zm0 1.789a1 1 0 1 0 .894-1.789l-.894 1.789zM7.447 7.106a1 1 0 1 0-.894 1.789l.894-1.789zM10 9a1 1 0 1 0-2 0h2zm-2 2.5a1 1 0 1 0 2 0H8zm9.447-5.606a1 1 0 1 0-.894-1.789l.894 1.789zm-2.894-.789a1 1 0 1 0 .894 1.789l-.894-1.789zm2 .789a1 1 0 1 0 .894-1.789l-.894 1.789zm-1.106-2.789a1 1 0 1 0-.894 1.789l.894-1.789zM18 5a1 1 0 1 0-2 0h2zm-2 2.5a1 1 0 1 0 2 0h-2zm-5.447-4.606a1 1 0 1 0 .894-1.789l-.894 1.789zM9 1l.447-.894a1 1 0 0 0-.894 0L9 1zm-2.447.106a1 1 0 1 0 .894 1.789l-.894-1.789zm-6 3a1 1 0 1 0 .894 1.789L.553 4.106zm2.894.789a1 1 0 1 0-.894-1.789l.894 1.789zm-2-.789a1 1 0 1 0-.894 1.789l.894-1.789zm1.106 2.789a1 1 0 1 0 .894-1.789l-.894 1.789zM2 5a1 1 0 1 0-2 0h2zM0 7.5a1 1 0 1 0 2 0H0zm8.553 12.394a1 1 0 1 0 .894-1.789l-.894 1.789zm-1.106-2.789a1 1 0 1 0-.894 1.789l.894-1.789zm1.106 1a1 1 0 1 0 .894 1.789l-.894-1.789zm2.894.789a1 1 0 1 0-.894-1.789l.894 1.789zM8 19a1 1 0 1 0 2 0H8zm2-2.5a1 1 0 1 0-2 0h2zm-7.447.394a1 1 0 1 0 .894-1.789l-.894 1.789zM1 15H0a1 1 0 0 0 .553.894L1 15zm1-2.5a1 1 0 1 0-2 0h2zm12.553 2.606a1 1 0 1 0 .894 1.789l-.894-1.789zM17 15l.447.894A1 1 0 0 0 18 15h-1zm1-2.5a1 1 0 1 0-2 0h2zm-7.447-5.394l-2 1 .894 1.789 2-1-.894-1.789zm-1.106 1l-2-1-.894 1.789 2 1 .894-1.789zM8 9v2.5h2V9H8zm8.553-4.894l-2 1 .894 1.789 2-1-.894-1.789zm.894 0l-2-1-.894 1.789 2 1 .894-1.789zM16 5v2.5h2V5h-2zm-4.553-3.894l-2-1-.894 1.789 2 1 .894-1.789zm-2.894-1l-2 1 .894 1.789 2-1L8.553.106zM1.447 5.894l2-1-.894-1.789-2 1 .894 1.789zm-.894 0l2 1 .894-1.789-2-1-.894 1.789zM0 5v2.5h2V5H0zm9.447 13.106l-2-1-.894 1.789 2 1 .894-1.789zm0 1.789l2-1-.894-1.789-2 1 .894 1.789zM10 19v-2.5H8V19h2zm-6.553-3.894l-2-1-.894 1.789 2 1 .894-1.789zM2 15v-2.5H0V15h2zm13.447 1.894l2-1-.894-1.789-2 1 .894 1.789zM18 15v-2.5h-2V15h2z',
    body: (
      <>
        Get official tools and libraries for your project: <A>Pinia</A>, <A>Vue Router</A>, <A>Vue Test Utils</A>, and <A>Vue Dev Tools</A>. If you need more resources, we suggest paying <A>Awesome Vue</A> a visit.
      </>
    ),
  },
  {
    title: 'Community',
    size: [20, 20],
    path: 'M15 4a1 1 0 1 0 0 2V4zm0 11v-1a1 1 0 0 0-1 1h1zm0 4l-.707.707A1 1 0 0 0 16 19h-1zm-4-4l.707-.707A1 1 0 0 0 11 14v1zm-4.707-1.293a1 1 0 0 0-1.414 1.414l1.414-1.414zm-.707.707l-.707-.707.707.707zM9 11v-1a1 1 0 0 0-.707.293L9 11zm-4 0h1a1 1 0 0 0-1-1v1zm0 4H4a1 1 0 0 0 1.707.707L5 15zm10-9h2V4h-2v2zm2 0a1 1 0 0 1 1 1h2a3 3 0 0 0-3-3v2zm1 1v6h2V7h-2zm0 6a1 1 0 0 1-1 1v2a3 3 0 0 0 3-3h-2zm-1 1h-2v2h2v-2zm-3 1v4h2v-4h-2zm1.707 3.293l-4-4-1.414 1.414 4 4 1.414-1.414zM11 14H7v2h4v-2zm-4 0c-.276 0-.525-.111-.707-.293l-1.414 1.414C5.42 15.663 6.172 16 7 16v-2zm-.707 1.121l3.414-3.414-1.414-1.414-3.414 3.414 1.414 1.414zM9 12h4v-2H9v2zm4 0a3 3 0 0 0 3-3h-2a1 1 0 0 1-1 1v2zm3-3V3h-2v6h2zm0-6a3 3 0 0 0-3-3v2a1 1 0 0 1 1 1h2zm-3-3H3v2h10V0zM3 0a3 3 0 0 0-3 3h2a1 1 0 0 1 1-1V0zM0 3v6h2V3H0zm0 6a3 3 0 0 0 3 3v-2a1 1 0 0 1-1-1H0zm3 3h2v-2H3v2zm1-1v4h2v-4H4zm1.707 4.707l.586-.586-1.414-1.414-.586.586 1.414 1.414z',
    body: (
      <>
        Got stuck? Ask your question on <A>Vue Land</A>, our official Discord server, or <A>StackOverflow</A>. You should also subscribe to <A>our mailing list</A> and follow the official <A>@vuejs</A> twitter account for latest news in the Vue world.
      </>
    ),
  },
  {
    title: 'Support Vue',
    size: [20, 20],
    path: 'M10 3.22l-.61-.6a5.5 5.5 0 0 0-7.666.105 5.5 5.5 0 0 0-.114 7.665L10 18.78l8.39-8.4a5.5 5.5 0 0 0-.114-7.665 5.5 5.5 0 0 0-7.666-.105l-.61.61z',
    body: (
      <>
        As an independent project, Vue relies on community backing for its sustainability. You can help us by <A>becoming a sponsor</A>.
      </>
    ),
  },
];

function WelcomeList() {
  return (
    <section className="-ml-[26px]">
      {items.map((item, i) => (
        <article key={item.title} className="flex gap-[72px]">
          <div className="flex w-[50px] shrink-0 flex-col">
            <span className={i === 0 ? 'ml-[26px] flex-1' : 'ml-[26px] flex-1 border-l border-[#e4e4e4]'} />
            <span className="flex size-[50px] items-center justify-center rounded-lg border border-[#e4e4e4] text-[#2c3e50]">
              <svg width={item.size[0]} height={item.size[1]} fill="currentColor" aria-hidden="true">
                <path d={item.path} />
              </svg>
            </span>
            <span className={i === items.length - 1 ? 'ml-[26px] flex-1' : 'ml-[26px] flex-1 border-l border-[#e4e4e4]'} />
          </div>
          <div className="flex-1 pt-[7px] pb-[17px]">
            <h3 className="mb-[7px] text-[19px] leading-[29px] font-medium">{item.title}</h3>
            <p className="text-[15px] leading-6">{item.body}</p>
          </div>
        </article>
      ))}
    </section>
  );
}

/* ---------- downloads ---------- */

const ImageFile = (
  <Svg>
    <rect width="16" height="16" rx="1" fill="#12bcd4" />
    <path d="M2.500 12.500V11L5.500 8l2 2 3-3.500 3 4.500v1.500z" fill="#fff" />
  </Svg>
);

const VectorFile = (
  <Svg>
    <rect y="1" width="16" height="14" fill="#e2e2e2" />
    <path d="M3 5h10M4.500 11.500Q4.500 6.500 8 5q3.500 1.500 3.500 6.500" fill="none" stroke="#8a8a8a" />
    <path d="M7 4h2v2H7zM3.500 10.500h2v2h-2zM10.500 10.500h2v2h-2z" fill="#777" />
  </Svg>
);

const downloads = [
  { id: 1, name: 'logo_small_ico....png', icon: ImageFile },
  { id: 2, name: 'logo_small_ico....png', icon: ImageFile },
  { id: 3, name: 'logorails.svg', icon: VectorFile },
];

function DownloadShelf() {
  return (
    <footer className="flex h-[60px] shrink-0 items-center border-t border-[#d5d7da] bg-white pl-1 text-sm text-[#3c4043]">
      {downloads.map((d) => (
        <div key={d.id} className="flex h-[47px] w-[233px] items-center border-r border-[#cfd1d4] pr-[15px] pl-4">
          {d.icon}
          <button className="ml-3 flex-1 text-left">{d.name}</button>
          <button aria-label={`Options for ${d.name}`}>
            <Svg>
              <path d="M3.500 10L8 5.500l4.500 4.500" fill="none" stroke="#5f6368" strokeWidth="1.700" />
            </Svg>
          </button>
        </div>
      ))}
      <button className="ml-auto h-[34px] w-[83px] rounded border border-[#dadce0] text-[13px] font-medium text-[#1a73e8]">Show all</button>
      <button aria-label="Close downloads" className="mr-2.5 ml-2.5">
        <Svg>
          <path d="M3.500 3.500l9 9M12.500 3.500l-9 9" stroke="#5f6368" strokeWidth="1.900" />
        </Svg>
      </button>
    </footer>
  );
}

export default function App() {
  return (
    <div className="flex min-h-screen flex-col bg-white font-['Inter',sans-serif]">
      <DesktopPanel />
      <TabStrip />
      <Toolbar />
      <BookmarksBar />
      <main className="mx-auto grid w-full max-w-[1280px] flex-1 grid-cols-2 items-center px-8 text-[#2c3e50]">
        <Greeting />
        <WelcomeList />
      </main>
      <DownloadShelf />
    </div>
  );
}
